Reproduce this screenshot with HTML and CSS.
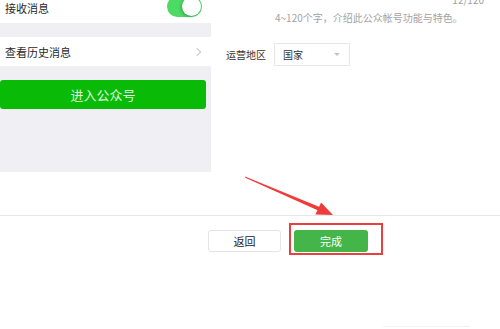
FILE: index.html
```html
<!DOCTYPE html>
<html lang="zh-CN">
<head>
    <meta charset="UTF-8">
    <meta name="viewport" content="width=device-width, initial-scale=1.0">
    <title>公众号设置</title>
    <link rel="stylesheet" href="styles.css">
</head>
<body>
    <div class="page">
        <div class="top">
            <div class="phone">
                <div class="row row-switch">
                    <span>接收消息</span>
                    <span class="switch"><span class="knob"></span></span>
                </div>
                <div class="row row-link">
                    <span>查看历史消息</span>
                    <span class="chevron"></span>
                </div>
                <div class="enter-btn">进入公众号</div>
            </div>

            <div class="settings">
                <div class="counter">12/120</div>
                <div class="hint">4~120个字，介绍此公众帐号功能与特色。</div>
                <div class="form-row">
                    <label class="form-label">运营地区</label>
                    <div class="select">
                        <span>国家</span>
                        <span class="caret"></span>
                    </div>
                </div>
            </div>
        </div>

        <div class="footer">
            <button class="btn btn-default">返回</button>
            <div class="highlight">
                <button class="btn btn-primary">完成</button>
            </div>
        </div>
        <div class="footer-note"></div>

        <!-- 标注箭头 -->
        <svg class="arrow" width="500" height="329" viewBox="0 0 500 329">
            <polygon points="245,176.4 245.3,177.8 319.3,211 320.8,207.4" fill="#f03b3b"/>
            <polygon points="333,215 315.4,214.6 321.1,202.6" fill="#f03b3b"/>
        </svg>
    </div>
</body>
</html>
```

FILE: styles.css
```css
* {
    margin: 0;
    padding: 0;
    box-sizing: border-box;
}

body {
    font-family: "Noto Sans CJK SC", "Noto Sans", sans-serif;
    font-size: 11px;
    color: #333;
    background: #fff;
    width: 500px;
    height: 329px;
    overflow: hidden;
}

.page {
    position: relative;
    height: 329px;
}

.top {
    display: flex;
    align-items: flex-start;
    height: 216px;
    border-bottom: 1px solid #e7e7eb;
}

/* 左侧手机预览 */
.phone {
    width: 211px;
    height: 172px;
    background: #efeff4;
    flex-shrink: 0;
}

.row {
    background: #fff;
    display: flex;
    justify-content: space-between;
    padding: 0 9px 0 5px;
    color: #2a2a2a;
}

.row-switch {
    height: 23px;
    align-items: flex-start;
    line-height: 16px;
}

.row-link {
    height: 29px;
    margin-top: 14px;
    align-items: center;
    padding-right: 11px;
}

.switch {
    position: relative;
    width: 35px;
    height: 21px;
    margin-top: -4px;
    border-radius: 11px;
    background: #4cd964;
}

.knob {
    position: absolute;
    top: 1px;
    right: 1px;
    width: 19px;
    height: 19px;
    border-radius: 50%;
    background: #fff;
    box-shadow: -1px 1px 3px rgba(0,0,0,0.25);
}

.chevron {
    width: 6px;
    height: 6px;
    border-top: 1px solid #c7c7cc;
    border-right: 1px solid #c7c7cc;
    transform: rotate(45deg);
}

.enter-btn {
    margin: 14px 5px 0 0;
    height: 29px;
    line-height: 29px;
    border-radius: 3px;
    background: #09bb07;
    color: rgba(255,255,255,0.88);
    font-size: 13px;
    text-align: center;
}

/* 右侧表单 */
.settings {
    flex: 1;
    padding-left: 15px;
}

.counter {
    margin-top: -7px;
    padding-right: 16px;
    text-align: right;
    color: #a0a0a0;
    font-size: 10px;
    line-height: 14px;
}

.hint {
    margin-top: 4px;
    padding-left: 49px;
    color: #a3a3a3;
    font-size: 10px;
    line-height: 14px;
}

.form-row {
    display: flex;
    align-items: center;
    margin-top: 18px;
}

.form-label {
    width: 48px;
    font-size: 10px;
    color: #333;
}

.select {
    display: flex;
    align-items: center;
    justify-content: space-between;
    width: 76px;
    height: 23px;
    padding: 0 9px 0 8px;
    border: 1px solid #e7e7eb;
    background: #fff;
    font-size: 10px;
    color: #333;
}

.caret {
    width: 0;
    height: 0;
    border-left: 3px solid transparent;
    border-right: 3px solid transparent;
    border-top: 3px solid #c4c4c4;
}

/* 底部按钮 */
.footer {
    display: flex;
    align-items: flex-start;
    padding-left: 208px;
    margin-top: 7px;
}

.btn {
    font-family: inherit;
    font-size: 11px;
    cursor: pointer;
    border-radius: 3px;
}

.btn-default {
    width: 73px;
    height: 22px;
    margin-top: 7px;
    margin-right: 8px;
    background: #fff;
    border: 1px solid #e4e4e8;
    color: #222;
}

.highlight {
    border: 2px solid #e8403f;
    padding: 5px 13px 1px 3px;
}

.btn-primary {
    display: block;
    width: 74px;
    height: 22px;
    border: none;
    background: #44b549;
    color: #fff;
}

.footer-note {
    margin: 71px 0 0 383px;
    width: 87px;
    border-top: 1px solid #f2f2f2;
}

.arrow {
    position: absolute;
    top: 0;
    left: 0;
    pointer-events: none;
}
```
